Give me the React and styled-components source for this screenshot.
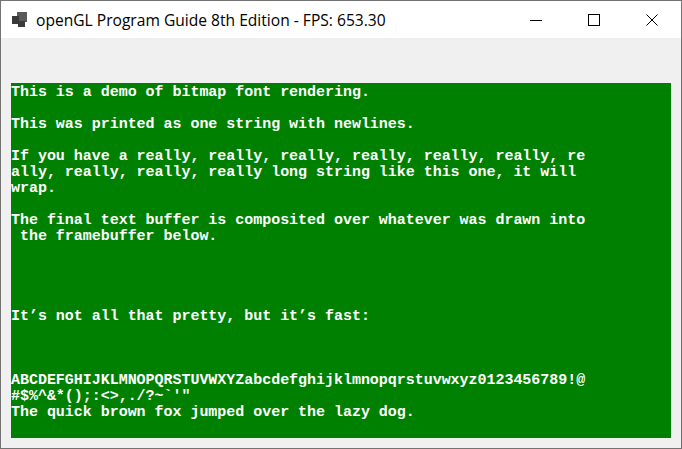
import React from "react";
import styled, { createGlobalStyle } from "styled-components";

const Global = createGlobalStyle`
  html, body {
    margin: 0;
    padding: 0;
    background: #f0f0f0;
  }
`;

const lines = [
  "This is a demo of bitmap font rendering.",
  "",
  "This was printed as one string with newlines.",
  "",
  "If you have a really, really, really, really, really, really, re",
  "ally, really, really, really long string like this one, it will",
  "wrap.",
  "",
  "The final text buffer is composited over whatever was drawn into",
  " the framebuffer below.",
  "",
  "",
  "",
  "",
  "It\u2019s not all that pretty, but it\u2019s fast:",
  "",
  "",
  "",
  "ABCDEFGHIJKLMNOPQRSTUVWXYZabcdefghijklmnopqrstuvwxyz0123456789!@",
  "#$%^&*();:<>,./?~`'\"",
  "The quick brown fox jumped over the lazy dog.",
];

const AppIcon = () => (
  <svg width="16" height="16" viewBox="0 0 16 16">
    <rect x="5" y="0" width="10" height="10" fill="#5a5a5a" />
    <rect x="0" y="4" width="7" height="8" fill="#3a3a3a" />
    <rect x="6" y="9" width="7" height="6" fill="#3a3a3a" />
  </svg>
);

const MinIcon = () => (
  <svg width="12" height="12" viewBox="0 0 12 12">
    <line x1="0" y1="6.5" x2="12" y2="6.5" stroke="#000" strokeWidth="1" />
  </svg>
);

const MaxIcon = () => (
  <svg width="12" height="12" viewBox="0 0 12 12">
    <rect x="0.5" y="0.5" width="11" height="11" fill="none" stroke="#000" strokeWidth="1" />
  </svg>
);

const CloseIcon = () => (
  <svg width="12" height="12" viewBox="0 0 12 12">
    <path d="M0.5 0.5 L11.5 11.5 M11.5 0.5 L0.5 11.5" stroke="#000" strokeWidth="1" />
  </svg>
);

export default function App() {
  return (
    <>
      <Global />
      <Window>
        <TitleBar>
          <IconSlot>
            <AppIcon />
          </IconSlot>
          <Title>openGL Program Guide 8th Edition - FPS: 653.30</Title>
          <Controls>
            <CaptionButton>
              <MinIcon />
            </CaptionButton>
            <CaptionButton>
              <MaxIcon />
            </CaptionButton>
            <CaptionButton>
              <CloseIcon />
            </CaptionButton>
          </Controls>
        </TitleBar>
        <Client>
          <Framebuffer>
            {lines.map((l, i) => (
              <Line key={i}>{l}</Line>
            ))}
          </Framebuffer>
        </Client>
      </Window>
    </>
  );
}

const Window = styled.div`
  width: 682px;
  height: 449px;
  box-sizing: border-box;
  border: 1px solid #737373;
  background: #f0f0f0;
  display: flex;
  flex-direction: column;
  overflow: hidden;
`;

const TitleBar = styled.div`
  height: 37px;
  flex-shrink: 0;
  background: #ffffff;
  display: flex;
  align-items: center;
`;

const IconSlot = styled.div`
  width: 16px;
  height: 16px;
  margin-left: 11px;
  margin-top: 1px;
  display: flex;
`;

const Title = styled.div`
  margin-left: 8px;
  font-family: "Open Sans", "Noto Sans", sans-serif;
  font-size: 15.6px;
  color: #000;
  white-space: nowrap;
`;

const Controls = styled.div`
  margin-left: auto;
  display: flex;
  height: 100%;
`;

const CaptionButton = styled.div`
  width: 58px;
  height: 100%;
  display: flex;
  align-items: center;
  justify-content: center;
`;

const Client = styled.div`
  flex: 1;
  padding: 45px 10px 10px 10px;
  display: flex;
`;

const Framebuffer = styled.div`
  flex: 1;
  background: #008000;
  color: #ffffff;
  font-family: "Liberation Mono", "DejaVu Sans Mono", monospace;
  font-weight: bold;
  font-size: 15px;
  line-height: 16px;
  padding-top: 2px;
  letter-spacing: -0.03px;
`;

const Line = styled.div`
  height: 16px;
  white-space: pre;
`;
